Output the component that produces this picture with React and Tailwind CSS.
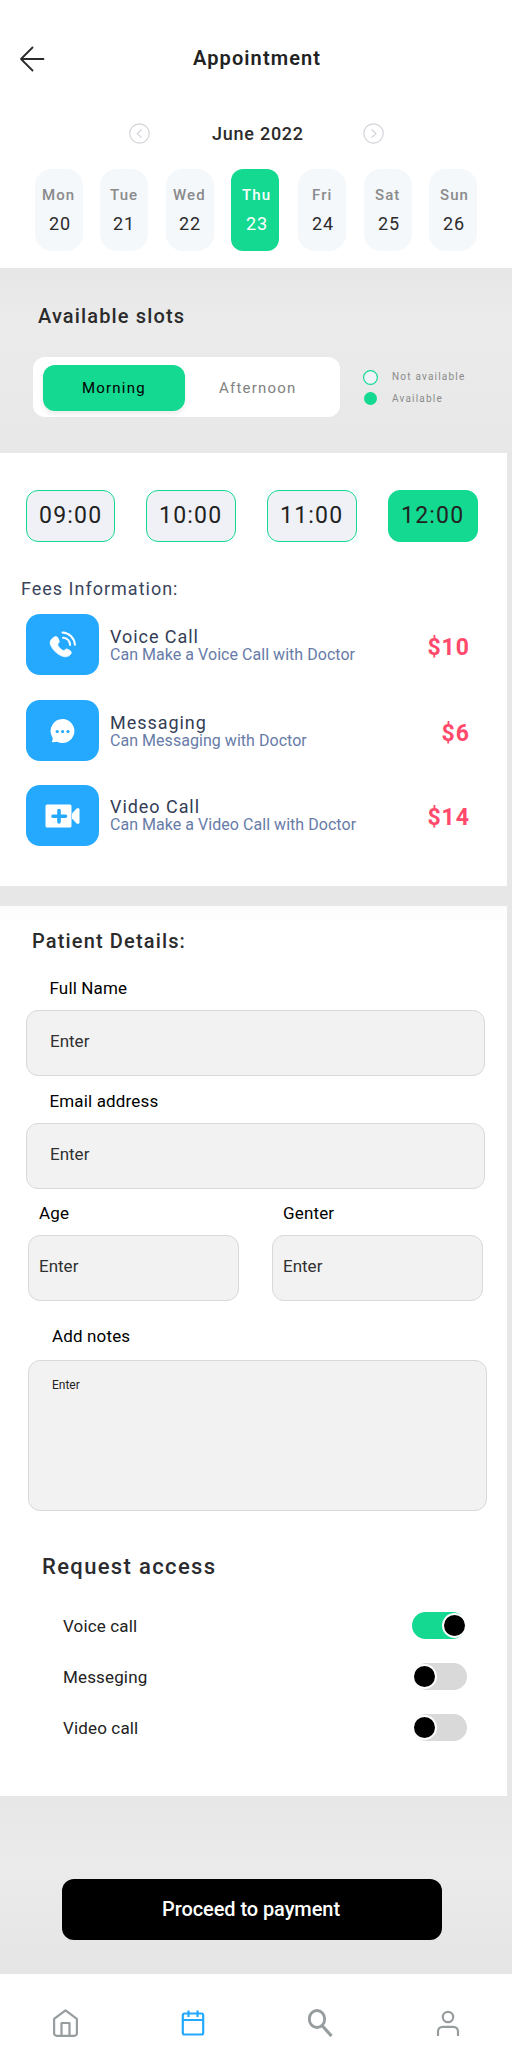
const days = [
  { d: 'Mon', n: 20, pill: 'ml-0', dx: 'pl-[7px]', nx: 'pl-[14px]' },
  { d: 'Tue', n: 21, pill: 'ml-[17px]', dx: 'pl-[10px]', nx: 'pl-[13px]' },
  { d: 'Wed', n: 22, pill: 'ml-[18px]', dx: 'pl-[7px]', nx: 'pl-[13px]' },
  { d: 'Thu', n: 23, pill: 'ml-[17px]', dx: 'pl-[11px]', nx: 'pl-[15px]', active: true },
  { d: 'Fri', n: 24, pill: 'ml-[19px]', dx: 'pl-[14px]', nx: 'pl-[14px]' },
  { d: 'Sat', n: 25, pill: 'ml-[18px]', dx: 'pl-[11px]', nx: 'pl-[14px]' },
  { d: 'Sun', n: 26, pill: 'ml-[17px]', dx: 'pl-[11px]', nx: 'pl-[14px]' },
];

const times = [
  { t: '09:00', cls: 'w-[89px] pl-[12px]' },
  { t: '10:00', cls: 'ml-[31px] w-[90px] pl-[12px]' },
  { t: '11:00', cls: 'ml-[31px] w-[90px] pl-[12px]' },
  { t: '12:00', cls: 'ml-[31px] w-[90px] pl-[12px]', active: true },
];

function PhoneIcon() {
  return (
    <svg width="28" height="28" viewBox="0 0 28 28" fill="none">
      <path d="M6.6 4.3c1.5-1 3-.4 3.700 1l1 2.300c.5 1.200.2 2.100-.6 2.900-.8.800-.8 1.500-.2 2.600 1 1.700 2.300 3 4 4.100 1.100.7 1.900.6 2.600-.1.900-.9 1.900-1.200 3-.6l2.200 1.200c1.400.8 1.700 2.200.8 3.500-2.100 3-5.800 3.500-9.500 1.800C8.700 20.800 4.900 17 2.900 12.300 1.700 9.300 3 6.200 6.600 4.300z" transform="translate(-1.300 1.800)" fill="#fff" stroke="#fff" strokeWidth="0.700" />
      <path d="M14 6.800c4 .4 6.800 3.300 7.100 7.200M13.500 1.600c6.700.4 12 5.400 12.400 12.200" stroke="#fff" strokeWidth="2" strokeLinecap="round" />
    </svg>
  );
}

function ChatIcon() {
  return (
    <svg width="26" height="26" viewBox="0 0 26 26">
      <path d="M12.600 1a12 12 0 1 1-5.600 22.700c-1.700.4-3.700.7-5.500.4 1-1.200 1.500-3.200 1-4.700A12 12 0 0 1 12.600 1z" fill="#fff" />
      <circle cx="7.200" cy="13.500" r="1.600" fill="#24a9ff" />
      <circle cx="12.600" cy="13.500" r="1.600" fill="#24a9ff" />
      <circle cx="18" cy="13.500" r="1.600" fill="#24a9ff" />
    </svg>
  );
}

function VideoIcon() {
  return (
    <svg width="36" height="24" viewBox="0 0 36 24">
      <path d="M2 .5h23a1.500 1.500 0 0 1 1.500 1.500v20a1.500 1.500 0 0 1-1.500 1.500H2A1.500 1.500 0 0 1 .5 22V2A1.500 1.500 0 0 1 2 .5z" fill="#fff" />
      <path d="M27 9.500 31.600 4.600c.8-.8 2.900-.6 2.900.9v13c0 1.500-2.100 1.700-2.900.9L27 14.500z" fill="#fff" />
      <path d="M14 6.500v11.500M8 12.200h12.500" stroke="#24a9ff" strokeWidth="3.600" strokeLinecap="round" />
    </svg>
  );
}

const fees = [
  { icon: PhoneIcon, name: 'Voice Call', text: 'Can Make a Voice Call with Doctor', price: '$10', cls: 'mt-[13px]', tcls: 'pt-[12px]', pcls: 'leading-[67px]' },
  { icon: ChatIcon, name: 'Messaging', text: 'Can Messaging with Doctor', price: '$6', cls: 'mt-[25px]', tcls: 'pt-[12px]', pcls: 'leading-[68px]' },
  { icon: VideoIcon, name: 'Video Call', text: 'Can Make a Video Call with Doctor', price: '$14', cls: 'mt-[24px]', tcls: 'pt-[11px]', pcls: 'leading-[66px]' },
];

function Field({ className, labelClass, valueClass, label }) {
  return (
    <div className={className}>
      <div className={`h-[22px] text-[17px] leading-[22px] tracking-[0.150px] text-black ${labelClass}`}>{label}</div>
      <div className={`mt-[11px] h-[66px] rounded-[12px] border border-[#d9d9d9] bg-[#f2f2f2] text-[17px] leading-[61px] text-[#303030] ${valueClass}`}>Enter</div>
    </div>
  );
}

function Toggle({ on }) {
  return (
    <div className={`flex h-[27px] w-[54px] items-center rounded-full ${on ? 'mr-[1px] justify-end bg-[#14d991]' : 'bg-[#d9d9d9]'}`}>
      <div className={`h-[25px] w-[25px] shrink-0 rounded-full border-2 border-white bg-black ${on ? '-mr-[1px]' : '-ml-[1px]'}`} />
    </div>
  );
}

export default function App() {
  return (
    <div className="flex h-[2062px] w-[512px] flex-col overflow-hidden bg-[#e7e7e7] font-['Roboto',sans-serif]">
      <header className="h-[268px] bg-white">
        <div className="flex h-[118px] items-center pl-[20px]">
          <svg width="25" height="26" viewBox="0 0 25 26" fill="none" stroke="#2b2b2b" strokeWidth="1.800" strokeLinecap="round" strokeLinejoin="round">
            <path d="M12.500 1.500 1 13l11.500 11.500M1 13h22.500" />
          </svg>
          <h1 className="ml-[148px] pb-[3px] text-[20px] font-semibold leading-[24px] tracking-[1.100px] text-[#222]">Appointment</h1>
        </div>
        <div className="flex h-[30px] items-center pl-[129px]">
          <svg width="21" height="21" viewBox="0 0 21 21" fill="none" stroke="#d3d4da" strokeLinecap="round" strokeLinejoin="round">
            <circle cx="10.500" cy="10.500" r="9.700" strokeWidth="1.200" />
            <path d="m12.300 6.800-4 3.800 4 3.800" strokeWidth="1.300" />
          </svg>
          <div className="w-[213px] pl-[62px] pt-[1px] text-[18px] font-medium leading-[22px] tracking-[0.750px] text-[#2b2b2b]">June 2022</div>
          <svg width="21" height="21" viewBox="0 0 21 21" fill="none" stroke="#d3d4da" strokeLinecap="round" strokeLinejoin="round">
            <circle cx="10.500" cy="10.500" r="9.700" strokeWidth="1.200" />
            <path d="m9 6.800 4 3.800-4 3.800" strokeWidth="1.300" />
          </svg>
        </div>
        <div className="mt-[21px] flex pl-[35px]">
          {days.map((x) => (
            <div key={x.d} className={`h-[82px] w-[48px] pt-[16px] ${x.pill} ${x.active ? 'rounded-[12px] bg-[#14d991] text-white' : 'rounded-[17px] bg-[#f4f8fb] text-[#2b2b2b]'}`}>
              <div className={`h-[20px] text-[15px] font-medium leading-[20px] tracking-[1.100px] ${x.dx} ${x.active ? '' : 'text-[#8a8a8a]'}`}>{x.d}</div>
              <div className={`mt-[8px] h-[22px] text-[18px] leading-[22px] tracking-[1px] ${x.nx}`}>{x.n}</div>
            </div>
          ))}
        </div>
      </header>

      <section className="h-[185px] bg-linear-to-b from-[#e7e7e7] via-[#ebebeb] via-30% to-[#e8e8e8] pt-[36px]">
        <h2 className="pl-[38px] text-[20px] font-medium leading-[24px] tracking-[1.150px] text-[#2b2b2b]">Available slots</h2>
        <div className="mt-[29px] flex pl-[33px]">
          <div className="flex h-[60px] w-[307px] rounded-[12px] bg-white pl-[10px] pt-[8px]">
            <div className="h-[46px] w-[142px] rounded-[12px] bg-[#14d991] pl-[39px] text-[15px] leading-[47px] tracking-[1.200px] text-black shadow-[0_3px_5px_rgba(0,0,0,0.08)]">Morning</div>
            <div className="pl-[34px] text-[15px] leading-[47px] tracking-[1.200px] text-[#828282]">Afternoon</div>
          </div>
          <div className="flex flex-col pl-[23px] pt-[12px]">
            <div className="flex h-[16px] items-center">
              <svg width="15" height="15" viewBox="0 0 15 15">
                <circle cx="7.500" cy="7.500" r="6.900" fill="#f0f2f8" stroke="#14d991" strokeWidth="1.200" />
              </svg>
              <span className="pl-[14px] text-[10px] leading-[14px] tracking-[1.200px] text-[#8a8a8a]">Not available</span>
            </div>
            <div className="mt-[6px] flex h-[15px] items-center">
              <div className="ml-px h-[13px] w-[13px] rounded-full bg-[#14d991]" />
              <span className="pl-[15px] text-[10px] leading-[14px] tracking-[1.200px] text-[#8a8a8a]">Available</span>
            </div>
          </div>
        </div>
      </section>

      <section className="h-[433px] w-[507px] bg-white pt-[37px]">
        <div className="flex pl-[26px]">
          {times.map((x) => (
            <div key={x.t} className={`h-[52px] rounded-[12px] border border-[#14d991] text-[23px] leading-[50px] tracking-[1.200px] text-[#222] ${x.cls} ${x.active ? 'bg-[#14d991]' : 'bg-[#f0f1f6]'}`}>{x.t}</div>
          ))}
        </div>
        <h3 className="mt-[35px] pl-[21px] text-[18px] leading-[24px] tracking-[1px] text-[#3a445c]">Fees Information:</h3>
        {fees.map((f) => (
          <div key={f.name} className={`flex h-[61px] pl-[26px] ${f.cls}`}>
            <div className="flex h-[61px] w-[73px] items-center justify-center rounded-[14px] bg-[#24a9ff]">
              <f.icon />
            </div>
            <div className={`flex-1 pl-[11px] ${f.tcls}`}>
              <div className="h-[19px] text-[18px] leading-[21px] tracking-[0.950px] text-[#333d55]">{f.name}</div>
              <div className="h-[18px] text-[16px] leading-[19px] tracking-[0.040px] text-[#677ba8]">{f.text}</div>
            </div>
            <div className={`pr-[37px] text-[23px] font-bold tracking-[1px] text-[#ff4a6b] ${f.pcls}`}>{f.price}</div>
          </div>
        ))}
      </section>

      <section className="mt-[20px] h-[890px] w-[507px] bg-linear-to-b from-[#fcfcfc] to-white to-[20px] pt-[22px]">
        <h2 className="pl-[32px] text-[20px] font-medium leading-[26px] tracking-[1.150px] text-[#2b2b2b]">Patient Details:</h2>
        <Field className="mt-[23px] w-[485px] pl-[26px]" labelClass="pl-[23.500px]" valueClass="pl-[23px]" label="Full Name" />
        <Field className="mt-[14px] w-[485px] pl-[26px]" labelClass="pl-[23.500px]" valueClass="pl-[23px]" label="Email address" />
        <div className="mt-[13px] flex gap-[33px] pl-[28px]">
          <Field className="w-[211px]" labelClass="pl-[11px]" valueClass="pl-[10px]" label="Age" />
          <Field className="w-[211px]" labelClass="pl-[11px]" valueClass="pl-[10px]" label="Genter" />
        </div>
        <div className="mt-[24px] pl-[52px] text-[17px] leading-[22px] tracking-[0.150px] text-black">Add notes</div>
        <div className="ml-[28px] mt-[13px] h-[151px] w-[459px] rounded-[12px] border border-[#d9d9d9] bg-[#f2f2f2] pl-[23px] pt-[15px] text-[12px] leading-[18px] text-[#222]">Enter</div>
        <h2 className="mt-[42px] pl-[42px] text-[22px] font-medium leading-[28px] tracking-[1.350px] text-[#2b2b30]">Request access</h2>
        <div className="mt-[31px] flex flex-col gap-[23px] pl-[63px] pr-[40px] text-[17px] leading-[28px] tracking-[0.150px] text-[#222]">
          <div className="flex justify-between"><span>Voice call</span><Toggle on /></div>
          <div className="flex justify-between"><span>Messeging</span><Toggle /></div>
          <div className="flex justify-between"><span>Video call</span><Toggle /></div>
        </div>
      </section>

      <section className="h-[178px] bg-linear-to-b from-[#e7e7e7] via-[#ebebeb] via-40% to-[#e5e5e5] pl-[62px] pt-[83px]">
        <button className="block h-[61px] w-[380px] rounded-[12px] bg-black pr-[2px] text-[20px] font-medium leading-[59px] tracking-[-0.080px] text-white">Proceed to payment</button>
      </section>

      <nav className="flex h-[88px] bg-white pl-[53px] pt-[35px]">
        <svg width="25" height="28" viewBox="0 0 25 28" fill="none" stroke="#979c9e" strokeWidth="2.200" strokeLinejoin="round">
          <path d="M1.100 9.800 12.500 1.300 23.900 9.800v14.500a2.500 2.500 0 0 1-2.500 2.500H3.600a2.500 2.500 0 0 1-2.500-2.500z" />
          <path d="M8.500 26.500V14h8v12.500" />
        </svg>
        <svg className="ml-[103px]" width="24" height="28" viewBox="0 0 24 28" fill="none" stroke="#24a9ff" strokeWidth="2.200">
          <rect x="1.800" y="4.500" width="20.400" height="21" rx="1.800" />
          <path d="M1.800 11h20.400M7.500 1.500v6.500M16.500 1.500v6.500" />
        </svg>
        <svg className="ml-[103px]" width="25" height="28" viewBox="0 0 25 28" fill="none" stroke="#979c9e">
          <ellipse cx="9" cy="10" rx="7.700" ry="8.500" strokeWidth="2.800" />
          <path d="m14.500 17 9 10" strokeWidth="3.200" />
        </svg>
        <svg className="ml-[103px]" width="24" height="28" viewBox="0 0 24 28" fill="none" stroke="#979c9e" strokeWidth="2.200">
          <circle cx="12" cy="8" r="5.200" />
          <path d="M2 27v-4.500c0-3 2.100-4.700 4.700-4.700h10.600c2.600 0 4.700 1.700 4.700 4.700V27" />
        </svg>
      </nav>
    </div>
  );
}
